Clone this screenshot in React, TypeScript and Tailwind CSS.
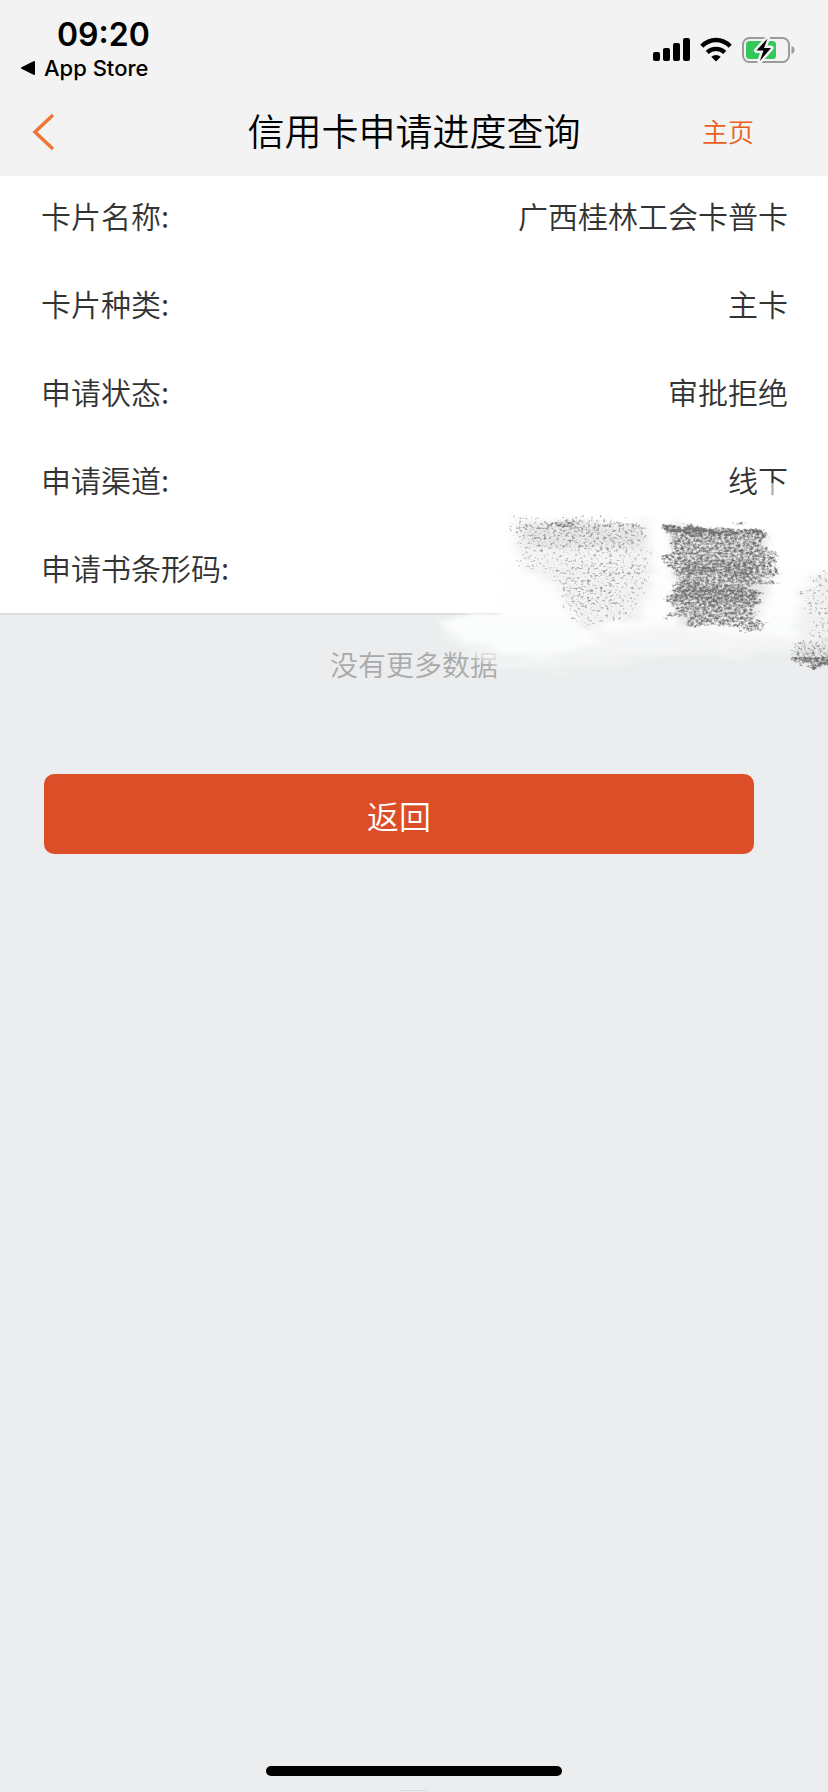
import type { ReactNode } from "react";

const ROWS = [
  { label: "卡片名称", value: "广西桂林工会卡普卡" },
  { label: "卡片种类", value: "主卡" },
  { label: "申请状态", value: "审批拒绝" },
  { label: "申请渠道", value: "线下" },
  { label: "申请书条形码", value: "" },
];

export default function App() {
  return (
    <div className="relative flex min-h-screen flex-col overflow-hidden bg-[#ebedee] font-['Noto_Sans_CJK_SC',sans-serif] font-[350] text-[#333]">
      <header className="bg-[#f3f3f3] text-black">
        <StatusBar />
        <NavBar title="信用卡申请进度查询" />
      </header>

      <main className="relative flex flex-col">
        <dl className="border-b-2 border-[#dedede] bg-white pr-10 pb-0.5 pl-[41px]">
          {ROWS.map((row) => (
            <Row key={row.label} label={row.label}>
              {row.value}
            </Row>
          ))}
        </dl>
        <p className="pt-[27px] text-center text-[28px] leading-[44px] text-[#aaa]">没有更多数据</p>
        <Scribble />
        <button
          type="button"
          className="mt-[88px] mr-[74px] ml-11 h-20 rounded-[10px] bg-[#dc4e27] pt-0.5 text-[32px] text-white"
        >
          返回
        </button>
      </main>

      <footer className="mt-auto flex h-[26px] flex-col items-center justify-between overflow-hidden">
        <div className="h-2.5 w-[296px] shrink-0 rounded-full bg-black" />
        <div className="h-0.5 w-7 shrink-0 rounded-t-full border-t border-[#d5d7d8]" />
      </footer>
    </div>
  );
}

function Row({ label, children }: { label: string; children: ReactNode }) {
  return (
    <div className="flex h-[88px] items-center justify-between text-[30px] leading-[44px] first:h-[83px] first:pb-1.5">
      <dt>{label}:</dt>
      <dd>{children}</dd>
    </div>
  );
}

function StatusBar() {
  return (
    <div className="flex h-[88px] items-start justify-between pr-8 pl-5 font-['Inter',sans-serif]">
      <div className="pt-4">
        <div className="pl-[37px] text-[32px] leading-[38px] font-semibold">09:20</div>
        <a href="#" className="flex items-center gap-2 text-[22px] leading-[28px] font-medium">
          <svg width="16" height="16" viewBox="0 0 16 16" aria-hidden="true">
            <path d="M1.5 7.2 13.5 1.2Q15 .6 15 2v12q0 1.4-1.5.8L1.5 8.8Q.2 8 1.5 7.2Z" />
          </svg>
          App Store
        </a>
      </div>
      <div className="flex items-center gap-2.5 pt-9">
        <svg width="37" height="26" viewBox="0 0 37 26" aria-label="信号">
          <rect x="0" y="15" width="7" height="9" rx="2" />
          <rect x="10" y="11" width="7" height="13" rx="2" />
          <rect x="20" y="6" width="7" height="18" rx="2" />
          <rect x="30" y="1" width="7" height="23" rx="2" />
        </svg>
        <svg width="32" height="26" viewBox="0 0 32 26" aria-label="无线网络">
          <g fill="none" stroke="#000" strokeWidth="4.4">
            <path d="M1.8 9.2Q8 3 16 3t14.2 6.2" />
            <path d="M7.2 15.4Q11 11.9 16 11.9t8.8 3.5" />
          </g>
          <path d="M16 24.5 11.3 19.8Q13.3 18 16 18t4.7 1.8Z" />
        </svg>
        <Battery />
      </div>
    </div>
  );
}

function Battery() {
  const bolt = "M25.5 2.5 14.5 14.5h7L17.8 25 29 12h-7Z";
  return (
    <svg width="54" height="28" viewBox="0 0 54 28" aria-label="正在充电">
      <rect x="1" y="2" width="46" height="24" rx="6.5" fill="none" stroke="#9b9b9b" strokeWidth="2" />
      <rect x="4" y="5" width="30" height="18" rx="3.5" fill="#34c759" />
      <path d="M49.5 10q3 1 3 4t-3 4Z" fill="#9b9b9b" />
      <path d={bolt} stroke="#f3f3f3" strokeWidth="5" strokeLinejoin="round" />
      <path d={bolt} />
    </svg>
  );
}

function NavBar({ title }: { title: string }) {
  return (
    <nav className="grid h-[88px] grid-cols-[1fr_auto_1fr] items-center pb-1">
      <button type="button" aria-label="后退" className="pt-1 pl-8">
        <svg width="24" height="38" viewBox="0 0 24 38" fill="none" stroke="#ee7538" strokeWidth="3.5">
          <path d="M21 2 3 19l18 17" />
        </svg>
      </button>
      <h1 className="text-[37px] leading-[48px] font-[350]">{title}</h1>
      <a href="#" className="justify-self-end pr-[74px] text-[26px] text-[#ea5f1c]">
        主页
      </a>
    </nav>
  );
}

// Crayon marks over the barcode value: soft white strokes, then grainy grey ones.
// In the grain layer a shape's opacity sets how dense its specks are.
function Scribble() {
  return (
    <svg
      className="pointer-events-none absolute top-[264px] right-0"
      width="428"
      height="260"
      viewBox="0 0 428 260"
      aria-hidden="true"
    >
      <defs>
        <filter id="haze" x="-10%" y="-10%" width="120%" height="120%" colorInterpolationFilters="sRGB">
          <feTurbulence type="fractalNoise" baseFrequency="0.02 0.12" numOctaves="3" seed="4" result="n" />
          <feDisplacementMap in="SourceGraphic" in2="n" scale="24" xChannelSelector="R" yChannelSelector="G" />
          <feGaussianBlur stdDeviation="4 2" />
        </filter>
        <filter
          id="grain"
          x="0"
          y="0"
          width="460"
          height="260"
          filterUnits="userSpaceOnUse"
          colorInterpolationFilters="sRGB"
        >
          <feTurbulence type="fractalNoise" baseFrequency="0.03 0.14" numOctaves="3" seed="8" result="edge" />
          <feDisplacementMap in="SourceGraphic" in2="edge" scale="22" xChannelSelector="R" yChannelSelector="B" />
          <feGaussianBlur stdDeviation="2 1" result="shape" />
          <feTurbulence type="fractalNoise" baseFrequency="0.32 0.4" numOctaves="3" seed="11" result="noise" />
          <feComposite in="shape" in2="noise" operator="arithmetic" k1="0" k2="2.2" k3="2.4" k4="-2.15" result="specks" />
          <feFlood floodColor="#727272" />
          <feComposite in2="specks" operator="in" />
        </filter>
      </defs>

      <g filter="url(#haze)">
        <path d="M44 184 70 174H440v38l-60 4-90-2-70 8-60 10-60-4-56-28Z" fill="#f5f6f6" opacity="0.7" />
        <path d="M40 182 74 172H440v26l-70 6-90-12-70 10-60 14-52-6-54-20Z" fill="#fbfcfc" />
        <path d="M190 188H320L400 204 300 210 200 216Z" fill="#f3f4f5" opacity="0.7" />
        <path d="M105 128H440v50H100Z" fill="#fdfdfd" />
      </g>
      <path d="M366 43h12v13h-12Z" fill="#fff" opacity="0.6" />

      <g filter="url(#haze)" fill="#777">
        <path d="M112 82H250L254 130 240 178 180 186 164 150 118 124Z" opacity="0.08" />
        <path d="M120 84H244V104L130 108Z" opacity="0.1" />
        <path d="M266 86 364 94 370 140 358 182 276 184 280 144Z" opacity="0.16" />
        <path d="M400 150 440 130V222H396Z" opacity="0.08" />
      </g>

      <g filter="url(#grain)" fill="#000">
        <path d="M106 78 180 72 250 82 254 132 240 160 238 180 180 188 164 178 156 140 118 128Z" opacity="0.35" />
        <path d="M112 82H246V104L200 112 128 106Z" opacity="0.14" />
        <path d="M164 122H248V134L216 140 214 168 168 166Z" opacity="0.1" />
        <path d="M118 84 245 83V87L120 88Z" opacity="0.35" />
        <path d="M262 83 366 91 366 108 376 116 378 142 360 144 362 172 350 178 366 182V190H292L284 182H262V176L282 172 266 160V150L278 142 264 124V112L272 106Z" opacity="0.64" />
        <path d="M260 83 367 90V95L262 92Z" opacity="0.7" />
        <path d="M280 124H358V134H280ZM272 146H358V162H272Z" opacity="0.3" />
        <path d="M398 150 424 126H450V224H392V206L412 196Z" opacity="0.36" />
        <path d="M392 206H450V216H392Z" opacity="0.2" />
        <path d="M390 217H450V225H394Z" opacity="0.65" />
      </g>
    </svg>
  );
}
